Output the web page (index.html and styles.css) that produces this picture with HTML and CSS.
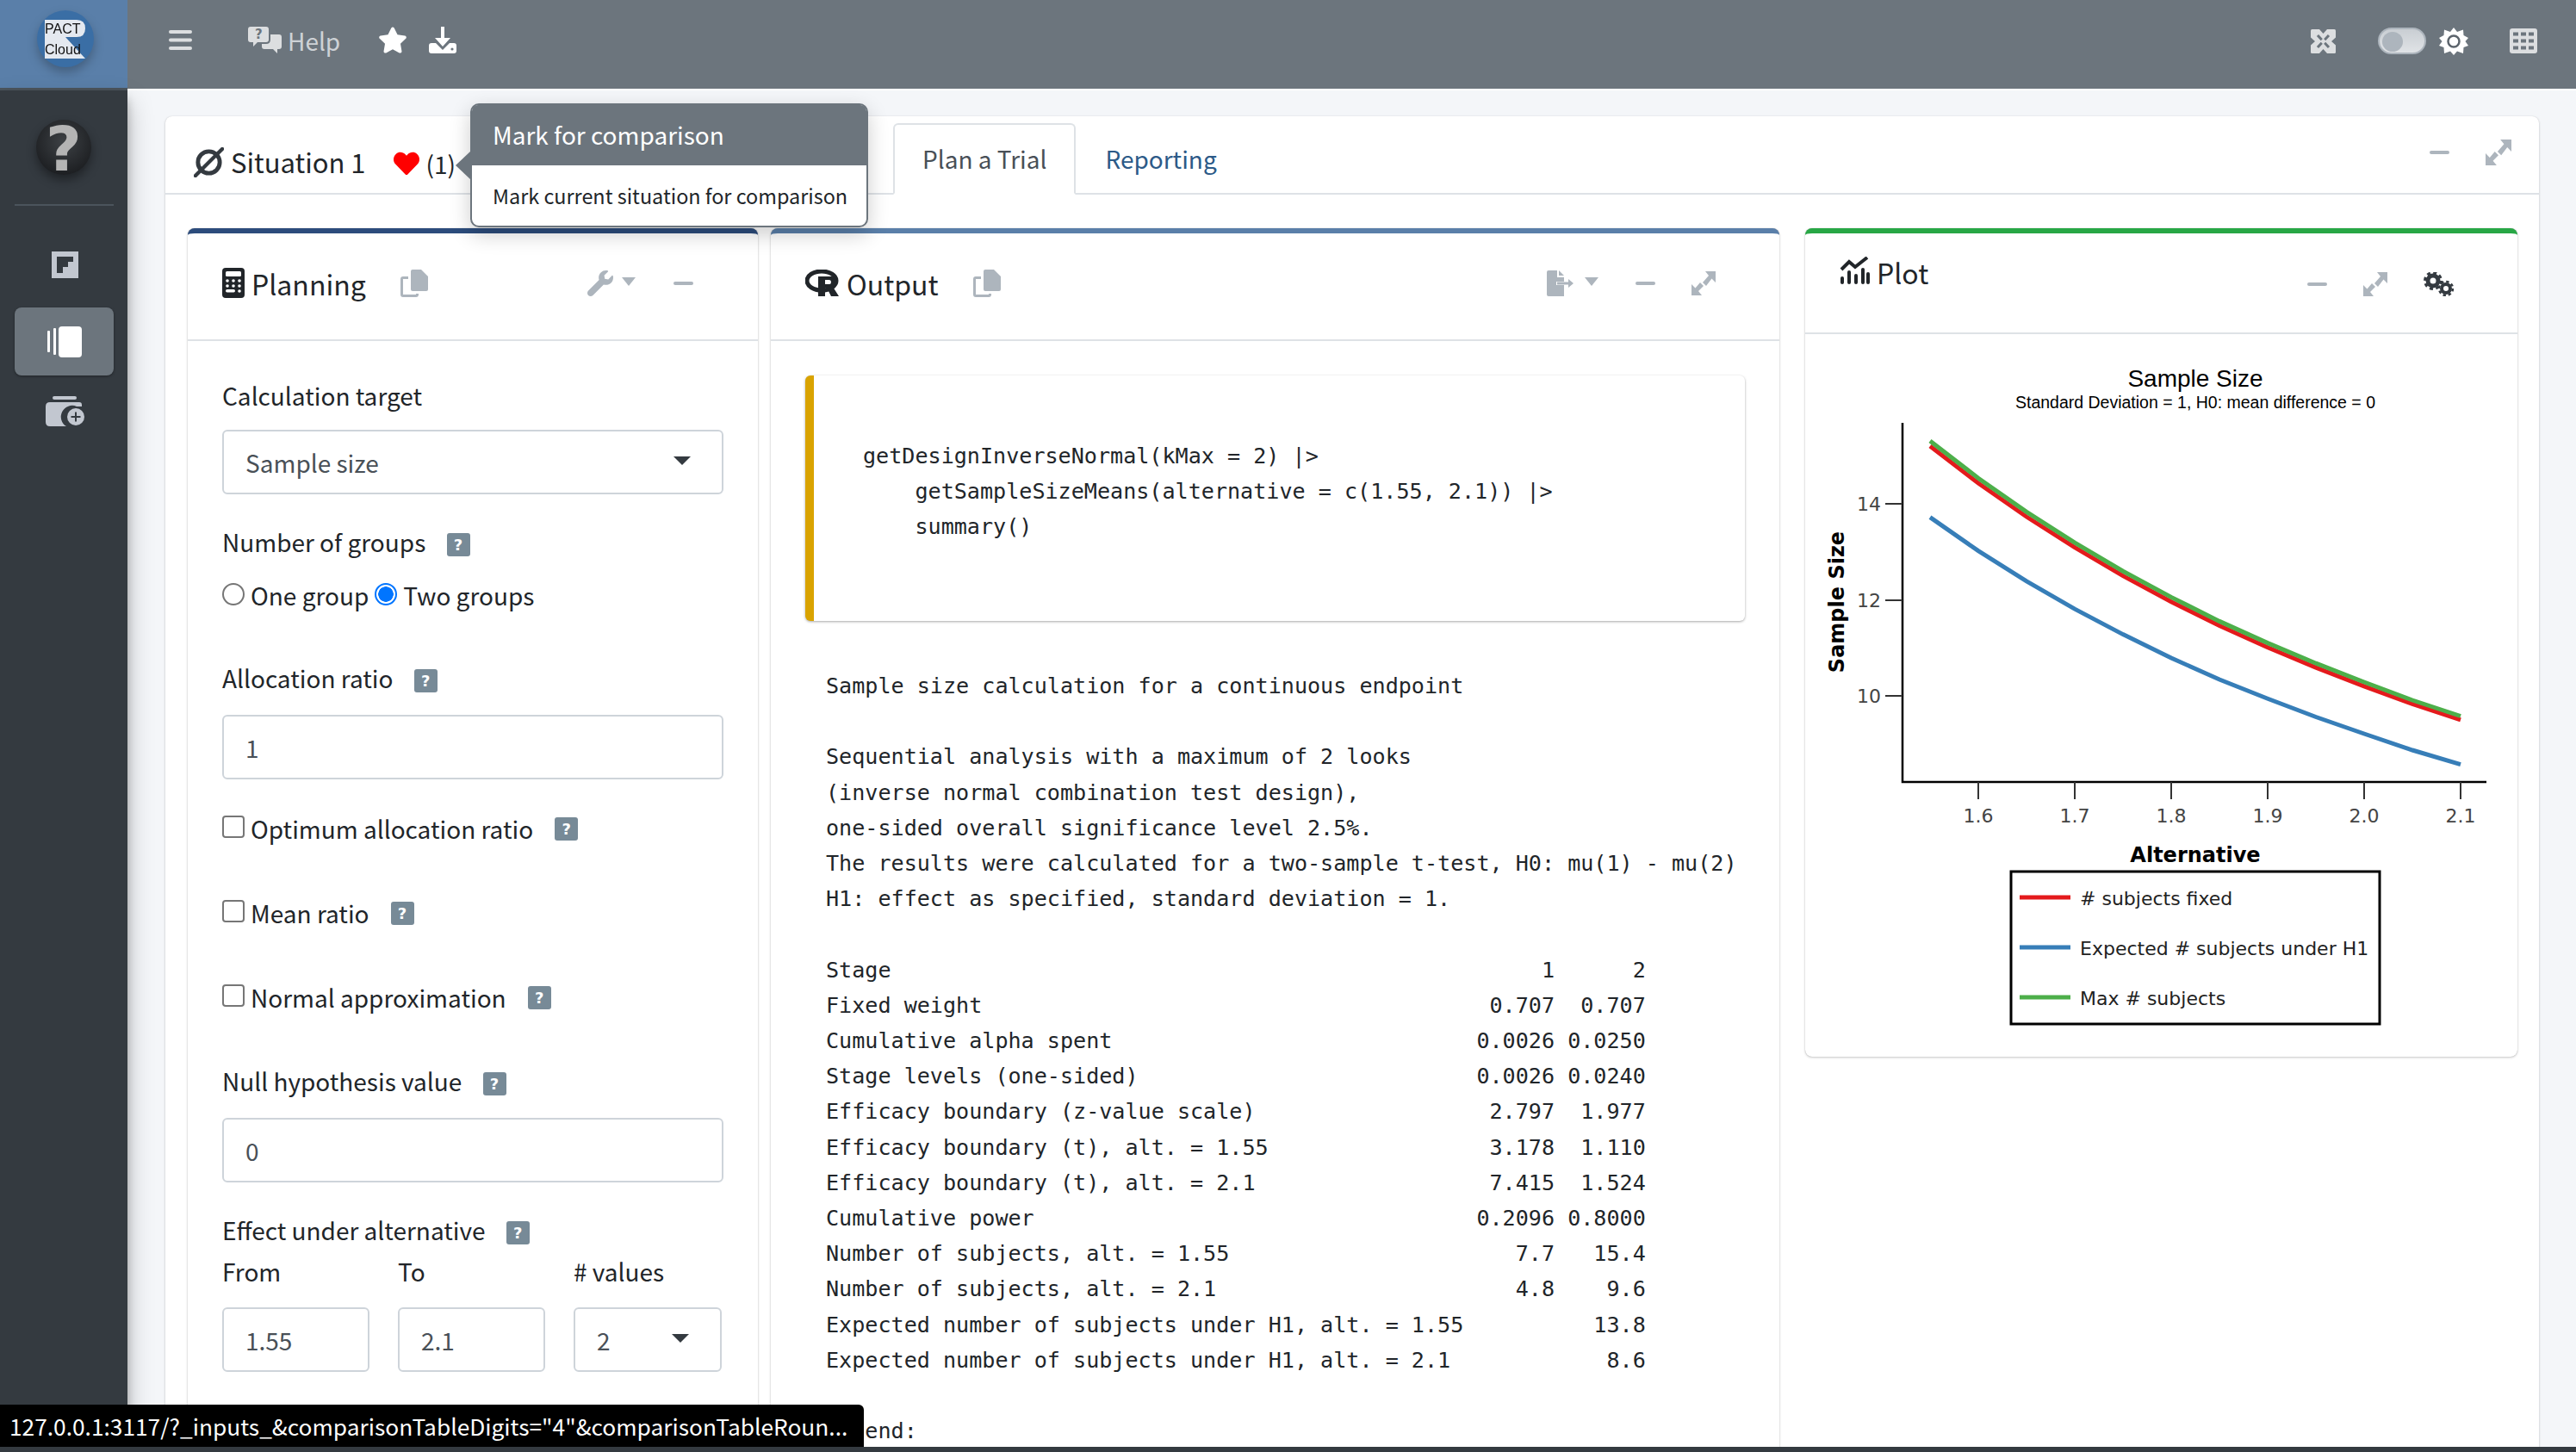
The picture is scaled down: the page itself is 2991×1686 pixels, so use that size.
FILE: index.html
```html
<!DOCTYPE html>
<html lang="en">
<head>
    <meta charset="UTF-8">
    <title>PACT Cloud</title>
    <link rel="stylesheet" href="styles.css">
</head>
<body>

<!-- top bar -->
<header class="topbar">
    <div class="brand">
        <svg class="brand-logo" viewBox="0 0 66 66" width="66" height="66">
            <circle cx="33" cy="33" r="33" fill="#3a6ea5"/>
            <path d="M9 11H46Q56 11 56 21Q56 31 46 31H33L56 56H9Z" fill="#e4e9f0"/>
            <text class="logo-text" x="9" y="27">PACT</text>
            <text class="logo-text" x="9" y="51">Cloud</text>
        </svg>
    </div>
    <div class="topbar-left">
        <svg class="icon-bars" viewBox="0 0 27 23" width="27" height="23">
            <rect y="0" width="27" height="4" rx="2"/>
            <rect y="9.5" width="27" height="4" rx="2"/>
            <rect y="19" width="27" height="4" rx="2"/>
        </svg>
        <span class="help-link">
            <svg viewBox="0 0 39 31" width="39" height="31">
                <path d="M3 0H21Q24 0 24 3V15Q24 18 21 18H11L6 23V18H3Q0 18 0 15V3Q0 0 3 0Z" fill="#dcdee0"/>
                <path d="M19 9H36Q39 9 39 12V23Q39 26 36 26H34V31L29 26H19Q16 26 16 23V20H21Q26 20 26 15V9Z" fill="#dcdee0"/>
                <text class="help-q" x="8" y="14">?</text>
            </svg>
            Help
        </span>
        <svg class="icon-star" viewBox="0 0 576 512" width="34" height="31">
            <path d="M259.3 17.8L194 150.2 47.9 171.5c-26.2 3.8-36.7 36.1-17.7 54.6l105.7 103-25 145.5c-4.5 26.3 23.2 46 46.4 33.7L288 439.6l130.7 68.7c23.2 12.2 50.9-7.4 46.4-33.7l-25-145.5 105.7-103c19-18.5 8.5-50.8-17.7-54.6L382 150.2 316.7 17.8c-11.7-23.6-45.6-23.9-57.4 0z" fill="#fff"/>
        </svg>
        <svg class="icon-download" viewBox="0 0 32 31" width="32" height="31">
            <path d="M14 0H18V13H25L16 23L7 13H14Z" fill="#fff"/>
            <path d="M3 19H8L16 27L24 19H29Q32 19 32 22V28Q32 31 29 31H3Q0 31 0 28V22Q0 19 3 19Z" fill="#fff"/>
            <circle cx="27" cy="26" r="1.6" fill="#6c757d"/>
        </svg>
    </div>
    <div class="topbar-right">
        <svg class="icon-full" viewBox="0 0 29 28" width="29" height="28">
            <rect width="29" height="28" rx="1.5" fill="#dcdee0"/>
            <path d="M10 0H19L14.5 5ZM10 28H19L14.5 23ZM0 9.5V18.5L5 14ZM29 9.5V18.5L24 14Z" fill="#6c757d"/>
            <path d="M8 7L21 21M21 7L8 21" stroke="#6c757d" stroke-width="3"/>
            <path d="M14.5 10.5L18 14L14.5 17.5L11 14Z" fill="#dcdee0"/>
        </svg>
        <span class="toggle"><span class="toggle-knob"></span></span>
        <svg class="icon-sun" viewBox="0 0 34 32" width="34" height="32">
            <polygon points="17,0 21,5 28,2.5 28.5,9 34,12 30.5,16 34,21 28.5,23 28,30 21,27.5 17,32 13,27.5 6,30 5.5,23 0,21 3.5,16 0,12 5.5,9 6,2.5 13,5" fill="#fff"/>
            <circle cx="17" cy="16" r="6.5" fill="#fff" stroke="#5c646c" stroke-width="2.5"/>
        </svg>
        <svg class="icon-grid" viewBox="0 0 32 29" width="32" height="29">
            <rect width="32" height="29" rx="3" fill="#dcdee0"/>
            <g fill="#6c757d">
                <rect x="4" y="4.5" width="6" height="4"/><rect x="13" y="4.5" width="6" height="4"/><rect x="22" y="4.5" width="6" height="4"/>
                <rect x="4" y="12.5" width="6" height="4"/><rect x="13" y="12.5" width="6" height="4"/><rect x="22" y="12.5" width="6" height="4"/>
                <rect x="4" y="20.5" width="6" height="4"/><rect x="13" y="20.5" width="6" height="4"/><rect x="22" y="20.5" width="6" height="4"/>
            </g>
        </svg>
    </div>
</header>

<div class="layout">
    <!-- sidebar -->
    <aside class="sidebar">
        <svg class="help-ball" viewBox="0 0 66 66" width="66" height="66">
            <defs>
                <radialGradient id="ball" cx="50%" cy="40%" r="60%">
                    <stop offset="0" stop-color="#3d4145"/>
                    <stop offset="1" stop-color="#1d1f22"/>
                </radialGradient>
            </defs>
            <circle cx="33" cy="33" r="32" fill="url(#ball)"/>
            <text class="ball-q" x="33" y="60">?</text>
        </svg>
        <div class="side-divider"></div>
        <div class="side-item">
            <svg viewBox="0 0 31 31" width="31" height="31">
                <path d="M0 0H31V31H0ZM6 6V25H13V18H19V12H25V6Z" fill="#c2c7d0" fill-rule="evenodd"/>
            </svg>
        </div>
        <div class="side-item side-item-active">
            <svg viewBox="0 0 40 36" width="40" height="36">
                <rect x="0" y="5" width="3" height="25" rx="1" fill="#fff"/>
                <rect x="7" y="2" width="3" height="31" rx="1" fill="#fff"/>
                <rect x="13" y="0" width="27" height="36" rx="4" fill="#fff"/>
            </svg>
        </div>
        <div class="side-item">
            <svg viewBox="0 0 45 35" width="45" height="35">
                <rect x="8" y="0" width="28" height="4" rx="2" fill="#c2c7d0"/>
                <path d="M5 7H39Q42 7 42 10V12H36A13 13 0 0 0 24 35H5Q0 35 0 30V12Q0 7 5 7Z" fill="#c2c7d0"/>
                <circle cx="35" cy="24" r="10" fill="#c2c7d0"/>
                <path d="M35 18.5V29.5M29.5 24H40.5" stroke="#343a40" stroke-width="2"/>
            </svg>
        </div>
    </aside>

    <!-- content -->
    <main class="content">
        <section class="outer-card">
            <div class="outer-head">
                <div class="situation">
                    <svg viewBox="0 0 36 36" width="35" height="35">
                        <circle cx="18" cy="18" r="13" fill="none" stroke="#343a40" stroke-width="5"/>
                        <path d="M2 34L34 2" stroke="#343a40" stroke-width="4.5" stroke-linecap="round"/>
                    </svg>
                    <span class="situation-name">Situation 1</span>
                    <svg class="heart" viewBox="0 0 512 512" width="32" height="30">
                        <path d="M462.3 62.6C407.5 15.9 326 24.3 275.7 76.2L256 96.5l-19.7-20.3C186.1 24.3 104.5 15.9 49.7 62.6c-62.8 53.6-66.1 149.8-9.9 207.9l193.5 199.8c12.5 12.9 32.8 12.9 45.3 0l193.5-199.8c56.3-58.1 53-154.3-9.8-207.9z" fill="#f00"/>
                    </svg>
                    <span class="situation-count">(1)</span>
                </div>
                <nav class="tabs">
                    <span class="tab tab-active">Plan a Trial</span>
                    <span class="tab">Reporting</span>
                </nav>
                <div class="tools tools-outer">
                    <span class="icon-minus"></span>
                    <svg class="icon-expand" viewBox="0 0 28 28" width="30" height="30"><use href="#expand"/></svg>
                </div>
            </div>

            <div class="panels">
                <!-- planning -->
                <section class="panel panel-planning">
                    <div class="panel-head">
                        <svg viewBox="0 0 26 35" width="26" height="35">
                            <rect width="26" height="35" rx="4" fill="#212529"/>
                            <rect x="4" y="4" width="18" height="6" rx="1.5" fill="#fff"/>
                            <g fill="#fff">
                                <circle cx="6" cy="15" r="1.8"/><circle cx="13" cy="15" r="1.8"/><circle cx="20" cy="15" r="1.8"/>
                                <circle cx="6" cy="21" r="1.8"/><circle cx="13" cy="21" r="1.8"/><circle cx="20" cy="21" r="1.8"/>
                                <rect x="4" y="25" width="11" height="3.5" rx="1.7"/><circle cx="20" cy="27" r="1.8"/>
                            </g>
                        </svg>
                        <span class="panel-title">Planning</span>
                        <svg class="icon-copy" viewBox="0 0 32 32" width="32" height="32"><use href="#copy"/></svg>
                        <div class="tools tools-planning">
                            <svg viewBox="0 0 512 512" width="30" height="32">
                                <path d="M507.73 109.1c-2.24-9.03-13.54-12.09-20.12-5.51l-74.36 74.36-67.88-11.31-11.31-67.88 74.36-74.36c6.62-6.62 3.43-17.9-5.66-20.16-47.38-11.74-99.55.91-136.58 37.93-39.64 39.64-50.55 97.1-34.05 147.2L18.74 402.76c-24.99 24.99-24.99 65.51 0 90.5 24.99 24.99 65.51 24.99 90.5 0l213.21-213.21c50.12 16.71 107.47 5.68 147.37-34.22 37.07-37.07 49.7-89.32 37.91-136.73z" fill="#adb5bd"/>
                            </svg>
                            <span class="caret-mini"></span>
                            <span class="icon-minus"></span>
                        </div>
                    </div>
                    <div class="panel-body form">
                        <div class="field-label">Calculation target</div>
                        <div class="control control-wide">Sample size<span class="caret"></span></div>

                        <div class="field-label group">Number of groups <span class="hint">?</span></div>
                        <div class="radio-row">
                            <span class="radio"></span><span>One group</span>
                            <span class="radio radio-on"></span><span>Two groups</span>
                        </div>

                        <div class="field-label block">Allocation ratio <span class="hint">?</span></div>
                        <div class="control control-wide">1</div>

                        <div class="check-row check-first"><span class="checkbox"></span>Optimum allocation ratio <span class="hint">?</span></div>
                        <div class="check-row"><span class="checkbox"></span>Mean ratio <span class="hint">?</span></div>
                        <div class="check-row"><span class="checkbox"></span>Normal approximation <span class="hint">?</span></div>

                        <div class="field-label block">Null hypothesis value <span class="hint">?</span></div>
                        <div class="control control-wide">0</div>

                        <div class="field-label group">Effect under alternative <span class="hint">?</span></div>
                        <div class="triple">
                            <div class="triple-label">From</div>
                            <div class="triple-label">To</div>
                            <div class="triple-label"># values</div>
                            <div class="control">1.55</div>
                            <div class="control">2.1</div>
                            <div class="control">2<span class="caret"></span></div>
                        </div>
                    </div>
                </section>

                <!-- output -->
                <section class="panel panel-output">
                    <div class="panel-head">
                        <svg viewBox="0 0 40 31" width="40" height="31">
                            <ellipse cx="19" cy="13" rx="17" ry="11" fill="none" stroke="#212529" stroke-width="5"/>
                            <path d="M15 8H31Q37 8 37 14Q37 18 32 20L39 31H30L25 21H23V31H15Z" fill="#212529"/>
                            <path d="M23 12V17H28Q30 17 30 14.5Q30 12 28 12Z" fill="#fff"/>
                        </svg>
                        <span class="panel-title">Output</span>
                        <svg class="icon-copy" viewBox="0 0 32 32" width="32" height="32"><use href="#copy"/></svg>
                        <div class="tools tools-output">
                            <svg viewBox="0 0 32 30" width="32" height="30">
                                <path d="M0 2Q0 0 2 0H12V8H20V13H11V17H20V30H2Q0 30 0 28Z" fill="#adb5bd"/>
                                <path d="M14 0L20 6H14Z" fill="#adb5bd"/>
                                <path d="M12 13.5H25V10L31 15L25 20V16.5H12Z" fill="#adb5bd"/>
                            </svg>
                            <span class="caret-mini"></span>
                            <span class="icon-minus"></span>
                            <svg class="icon-expand" viewBox="0 0 28 28" width="28" height="28"><use href="#expand"/></svg>
                        </div>
                    </div>
                    <div class="panel-body output-body">
                        <pre class="code-box">getDesignInverseNormal(kMax = 2) |&gt;
    getSampleSizeMeans(alternative = c(1.55, 2.1)) |&gt;
    summary()</pre>
                        <pre class="result">Sample size calculation for a continuous endpoint

Sequential analysis with a maximum of 2 looks
(inverse normal combination test design),
one-sided overall significance level 2.5%.
The results were calculated for a two-sample t-test, H0: mu(1) - mu(2)
H1: effect as specified, standard deviation = 1.

Stage                                                  1      2
Fixed weight                                       0.707  0.707
Cumulative alpha spent                            0.0026 0.0250
Stage levels (one-sided)                          0.0026 0.0240
Efficacy boundary (z-value scale)                  2.797  1.977
Efficacy boundary (t), alt. = 1.55                 3.178  1.110
Efficacy boundary (t), alt. = 2.1                  7.415  1.524
Cumulative power                                  0.2096 0.8000
Number of subjects, alt. = 1.55                      7.7   15.4
Number of subjects, alt. = 2.1                       4.8    9.6
Expected number of subjects under H1, alt. = 1.55          13.8
Expected number of subjects under H1, alt. = 2.1            8.6

Legend:</pre>
                    </div>
                </section>

                <!-- plot -->
                <section class="panel panel-plot">
                    <div class="panel-head plot-head">
                        <svg class="plot-icon" viewBox="0 0 35 32" width="35" height="32">
                            <path d="M2 15L11 6L18 12L32 1" fill="none" stroke="#212529" stroke-width="4"/>
                            <rect x="1" y="23" width="4" height="9" rx="2" fill="#212529"/>
                            <rect x="9" y="16" width="4" height="16" rx="2" fill="#212529"/>
                            <rect x="17" y="20" width="4" height="12" rx="2" fill="#212529"/>
                            <rect x="25" y="13" width="4" height="19" rx="2" fill="#212529"/>
                            <rect x="31" y="18" width="4" height="14" rx="2" fill="#212529"/>
                        </svg>
                        <span class="panel-title">Plot</span>
                        <div class="tools tools-plot">
                            <span class="icon-minus"></span>
                            <svg class="icon-expand" viewBox="0 0 28 28" width="28" height="28"><use href="#expand"/></svg>
                            <svg viewBox="0 0 35 28" width="35" height="28">
                                <circle cx="11" cy="10" r="6" fill="none" stroke="#343a40" stroke-width="5"/>
                                <circle cx="11" cy="10" r="9.5" fill="none" stroke="#343a40" stroke-width="3" stroke-dasharray="4 3.45"/>
                                <circle cx="26" cy="19" r="5" fill="none" stroke="#343a40" stroke-width="4"/>
                                <circle cx="26" cy="19" r="8" fill="none" stroke="#343a40" stroke-width="2.5" stroke-dasharray="3.4 2.88"/>
                            </svg>
                        </div>
                    </div>
                    <svg class="chart" viewBox="2096 389 827 838" width="827" height="838">
                        <text class="chart-title" x="2549" y="450">Sample Size</text>
                        <text class="chart-sub" x="2549" y="475">Standard Deviation = 1, H0: mean difference = 0</text>

                        <path class="axis" d="M2209 492V909H2887"/>
                        <path class="axis-tick" d="M2297 909V929M2409 909V929M2521 909V929M2633 909V929M2745 909V929M2857 909V929M2189 586H2209M2189 698H2209M2189 809H2209"/>
                        <text class="tick-x" x="2297" y="956">1.6</text>
                        <text class="tick-x" x="2409" y="956">1.7</text>
                        <text class="tick-x" x="2521" y="956">1.8</text>
                        <text class="tick-x" x="2633" y="956">1.9</text>
                        <text class="tick-x" x="2745" y="956">2.0</text>
                        <text class="tick-x" x="2857" y="956">2.1</text>
                        <text class="tick-y" x="2184" y="594">14</text>
                        <text class="tick-y" x="2184" y="706">12</text>
                        <text class="tick-y" x="2184" y="817">10</text>

                        <text class="axis-title" x="2549" y="1002">Alternative</text>
                        <text class="axis-title" transform="translate(2141 700) rotate(-90)">Sample Size</text>

                        <polyline class="line line-blue" points="2241,601.6 2297,640.6 2353,675.8 2409,708.1 2465,737.6 2521,765 2577,790 2633,812.3 2689,833.5 2745,853 2801,872 2857,888.7"/>
                        <polyline class="line line-red" points="2241,519.1 2297,562 2353,601 2409,636.7 2465,669.6 2521,699.7 2577,727.6 2633,752.7 2689,776.1 2745,797.8 2801,818.5 2857,836.9"/>
                        <polyline class="line line-green" points="2241,513 2297,556.2 2353,595.4 2409,631.2 2465,664.2 2521,694.4 2577,722.4 2633,747.6 2689,771.2 2745,793 2801,814 2857,832.5"/>

                        <rect class="legend-box" x="2335" y="1013" width="428" height="177"/>
                        <path class="line line-red" d="M2345 1043H2404"/>
                        <path class="line line-blue" d="M2345 1101H2404"/>
                        <path class="line line-green" d="M2345 1159H2404"/>
                        <text class="legend-text" x="2415" y="1052"># subjects fixed</text>
                        <text class="legend-text" x="2415" y="1110">Expected # subjects under H1</text>
                        <text class="legend-text" x="2415" y="1168">Max # subjects</text>
                    </svg>
                </section>
            </div>
        </section>
    </main>
</div>

<!-- popover over the heart button -->
<div class="popover">
    <div class="popover-title">Mark for comparison</div>
    <div class="popover-body">Mark current situation for comparison</div>
</div>

<!-- browser link status -->
<div class="status-link">127.0.0.1:3117/?_inputs_&amp;comparisonTableDigits="4"&amp;comparisonTableRoun...</div>
<div class="bottom-strip"></div>

<!-- shared icons -->
<svg class="icon-defs" width="0" height="0">
    <symbol id="copy" viewBox="0 0 32 32">
        <path d="M12 2Q12 0 14 0H24L32 8V23Q32 25 30 25H14Q12 25 12 23Z" fill="#adb5bd"/>
        <path d="M9 8H3Q0 8 0 11V29Q0 32 3 32H18Q21 32 21 29V28H18V29H3V11H9Z" fill="#adb5bd"/>
    </symbol>
    <symbol id="expand" viewBox="0 0 28 28">
        <path d="M28 0V13L23.5 8.5L17 17L13 13L20 5L16 0Z" fill="#adb5bd"/>
        <path d="M0 28V15L4.5 19.5L10 13L14 17L8 23L12 28Z" fill="#adb5bd"/>
    </symbol>
</svg>

</body>
</html>
```

FILE: styles.css
```css
* {
    box-sizing: border-box;
}
html, body {
    margin: 0;
    height: 100%;
    overflow: hidden;
}
body {
    font-family: "Noto Sans CJK SC", "Noto Sans", Arial, sans-serif;
    font-size: 28px;
    line-height: 36px;
    color: #212529;
    background-color: #f4f6f9;
}
svg {
    display: block;
    flex: none;
}
.icon-defs {
    position: absolute;
}

/* top bar */
.topbar {
    display: flex;
    align-items: center;
    height: 105px;
    background-color: #6c757d;
    border-bottom: 2px solid #fff;
}
.brand {
    display: flex;
    justify-content: center;
    align-items: center;
    width: 148px;
    height: 105px;
    background-color: #5a7fa9;
    border-bottom: 3px solid #4b545c;
    margin-bottom: -2px;
}
.brand-logo {
    margin-bottom: 12px;
    margin-left: 3px;
    filter: drop-shadow(0 6px 6px rgba(0, 0, 0, 0.25));
}
.logo-text {
    font-family: "Liberation Sans", Arial, sans-serif;
    font-size: 16px;
    fill: #111;
}
.topbar-left {
    display: flex;
    align-items: center;
    padding-left: 48px;
    margin-top: -10px;
}
.icon-bars {
    fill: #dcdee0;
    margin-right: 65px;
}
.help-link {
    display: flex;
    align-items: center;
    gap: 7px;
    font-size: 28px;
    color: #ced2d6;
    margin-right: 44px;
}
.help-q {
    font-family: "DejaVu Sans", sans-serif;
    font-size: 15px;
    font-weight: bold;
    fill: #6c757d;
}
.icon-star {
    margin-right: 25px;
}
.topbar-right {
    display: flex;
    align-items: center;
    margin-left: auto;
    padding-right: 45px;
    margin-top: -8px;
}
.icon-full {
    margin-right: 49px;
}
.toggle {
    display: block;
    width: 56px;
    height: 31px;
    padding: 3px;
    border-radius: 16px;
    background: linear-gradient(#c9ced3, #e0e3e6);
    border: 2px solid #adb5bd;
    margin-right: 15px;
}
.toggle-knob {
    display: block;
    width: 24px;
    height: 23px;
    border-radius: 50%;
    background-color: #adb5bd;
}
.icon-sun {
    margin-right: 48px;
}

/* page layout */
.layout {
    display: flex;
    height: 1581px;
}
.sidebar {
    display: flex;
    flex-direction: column;
    align-items: center;
    width: 148px;
    flex: none;
    background-color: #343a40;
    padding-top: 33px;
    box-shadow: 0 14px 28px rgba(0, 0, 0, 0.25), 0 10px 10px rgba(0, 0, 0, 0.22);
}
.help-ball {
    filter: drop-shadow(0 6px 6px rgba(0, 0, 0, 0.4));
}
.ball-q {
    font-family: "DejaVu Sans", sans-serif;
    font-size: 72px;
    font-weight: bold;
    text-anchor: middle;
    fill: #b4b4b4;
}
.side-divider {
    width: 115px;
    height: 2px;
    background-color: #4b545c;
    margin-top: 33px;
    margin-bottom: 29px;
}
.side-item {
    display: flex;
    justify-content: center;
    align-items: center;
    width: 115px;
    height: 79px;
    border-radius: 8px;
    margin-bottom: 10px;
    padding-left: 2px;
}
.side-item-active {
    background-color: #6c757d;
    box-shadow: 0 1px 3px rgba(0, 0, 0, 0.4);
    margin-bottom: 2px;
}
.content {
    flex: 1;
    padding: 30px 43px 0 44px;
    min-width: 0;
}

/* outer card */
.outer-card {
    height: 100%;
    background-color: #fff;
    border-radius: 8px 8px 0 0;
    box-shadow: 0 0 1px rgba(0, 0, 0, 0.125), 0 1px 3px rgba(0, 0, 0, 0.2);
}
.outer-head {
    display: flex;
    align-items: flex-end;
    height: 91px;
    border-bottom: 2px solid #dee2e6;
    padding-left: 33px;
}
.situation {
    display: flex;
    align-items: center;
    width: 812px;
    height: 90px;
    padding-top: 18px;
}
.situation-name {
    font-size: 31px;
    margin-left: 8px;
}
.heart {
    margin-left: 31px;
    margin-top: 3px;
}
.situation-count {
    margin-left: 7px;
    margin-top: 3px;
}
.tabs {
    display: flex;
    margin-bottom: -2px;
}
.tab {
    display: block;
    height: 83px;
    line-height: 78px;
    padding: 0 32px;
    font-size: 28px;
    color: #2c5a88;
    border: 2px solid transparent;
    border-radius: 6px 6px 0 0;
}
.tab-active {
    color: #495057;
    border-color: #dee2e6 #dee2e6 #fff;
}
.tools {
    display: flex;
    align-items: center;
    margin-left: auto;
}
.tools-outer {
    height: 90px;
    gap: 42px;
    padding-right: 32px;
    margin-bottom: 2px;
}
.icon-minus {
    display: block;
    width: 23px;
    height: 4px;
    border-radius: 2px;
    background-color: #adb5bd;
}
.caret-mini {
    width: 0;
    height: 0;
    border-left: 8px solid transparent;
    border-right: 8px solid transparent;
    border-top: 10px solid #adb5bd;
}

/* panels */
.panels {
    display: grid;
    grid-template-columns: 662px 1171px 842px;
    column-gap: 15px;
    align-items: start;
    padding: 39px 25px 0 26px;
}
.panel {
    background-color: #fff;
    border-top: 6px solid #2c4c7c;
    border-radius: 8px 8px 0 0;
    box-shadow: 0 0 1px rgba(0, 0, 0, 0.3), 0 1px 3px rgba(0, 0, 0, 0.2);
    height: 1500px;
}
.panel-output {
    border-top-color: #5a7fa9;
}
.panel-plot {
    border-top-color: #28a745;
    margin-left: 15px;
    height: 962px;
    border-radius: 8px;
}
.panel-head {
    display: flex;
    align-items: center;
    height: 125px;
    padding: 0 40px 8px;
    border-bottom: 2px solid #dee2e6;
}
.panel-title {
    font-size: 32px;
    margin-left: 8px;
}
.icon-copy {
    margin-left: 40px;
}
.tools-planning {
    padding-right: 35px;
}
.tools-planning .caret-mini {
    margin-left: 10px;
    margin-right: 44px;
    margin-top: -4px;
}
.tools-output {
    padding-right: 34px;
}
.tools-output .caret-mini {
    margin-left: 12px;
    margin-right: 43px;
    margin-top: -4px;
}
.tools-output .icon-minus {
    margin-right: 42px;
}
.plot-head {
    height: 117px;
    padding-bottom: 26px;
}
.plot-icon {
    margin-top: -4px;
}
.tools-plot {
    gap: 42px;
    padding-right: 34px;
    margin-top: 28px;
}

/* form */
.form {
    padding: 46px 40px 0;
}
.field-label {
    height: 36px;
    line-height: 34px;
    margin-bottom: 21px;
}
.field-label.group {
    margin-top: 38px;
    margin-bottom: 25px;
}
.field-label.block {
    margin-top: 62px;
    margin-bottom: 24px;
}
.control {
    display: flex;
    align-items: center;
    justify-content: space-between;
    height: 75px;
    padding: 0 36px 0 25px;
    border: 2px solid #ced4da;
    border-radius: 6px;
    color: #495057;
}
.caret {
    width: 0;
    height: 0;
    border-left: 10px solid transparent;
    border-right: 10px solid transparent;
    border-top: 10px solid #343a40;
    margin-top: -4px;
}
.radio-row {
    display: flex;
    align-items: center;
    height: 36px;
    margin-top: 2px;
    margin-bottom: -1px;
}
.radio {
    width: 26px;
    height: 26px;
    border-radius: 50%;
    border: 2px solid #767676;
    margin-right: 7px;
    margin-top: -2px;
}
.radio + span {
    margin-right: 7px;
}
.radio-on {
    border-color: #0075ff;
    background: radial-gradient(circle, #0075ff 0 8.5px, #fff 9px);
}
.check-row {
    display: flex;
    align-items: center;
    height: 36px;
    line-height: 32px;
    margin-top: 62px;
}
.check-first {
    margin-top: 39px;
}
.checkbox {
    width: 26px;
    height: 26px;
    border: 2px solid #767676;
    border-radius: 4px;
    margin-right: 7px;
    margin-top: -4px;
    flex: none;
}
.hint {
    display: inline-block;
    width: 27px;
    height: 27px;
    margin-left: 18px;
    border-radius: 3px;
    background-color: #778a97;
    color: #fff;
    font-family: "DejaVu Sans", sans-serif;
    font-size: 18px;
    font-weight: bold;
    line-height: 27px;
    text-align: center;
    vertical-align: 2px;
}
.check-row .hint {
    margin-left: 25px;
}
.triple {
    display: grid;
    grid-template-columns: 171px 171px 172px;
    column-gap: 33px;
    margin-top: -12px;
}
.triple-label {
    height: 36px;
    line-height: 32px;
    margin-bottom: 22px;
}

/* output */
.output-body {
    padding: 40px 40px 0;
}
pre {
    margin: 0;
    font-family: "DejaVu Sans Mono", "Liberation Mono", monospace;
    font-size: 25.1px;
    line-height: 41.2px;
    color: #212529;
}
.code-box {
    height: 285px;
    padding: 73px 0 0 57px;
    border-left: 10px solid #d9a300;
    border-radius: 6px;
    background-color: #fff;
    box-shadow: 0 1px 3px rgba(0, 0, 0, 0.35);
}
.result {
    padding: 55px 0 0 24px;
}

/* plot */
.chart-title {
    font-family: "Liberation Sans", Arial, sans-serif;
    font-size: 28px;
    text-anchor: middle;
}
.chart-sub {
    font-family: "Liberation Sans", Arial, sans-serif;
    font-size: 19.5px;
    text-anchor: middle;
}
.axis {
    fill: none;
    stroke: #000;
    stroke-width: 2.5px;
}
.axis-tick {
    stroke: #333;
    stroke-width: 2px;
}
.tick-x, .tick-y {
    font-family: "DejaVu Sans", sans-serif;
    font-size: 22px;
    fill: #444;
}
.tick-x {
    text-anchor: middle;
}
.tick-y {
    text-anchor: end;
}
.axis-title {
    font-family: "DejaVu Sans", sans-serif;
    font-size: 24px;
    font-weight: bold;
    text-anchor: middle;
}
.line {
    fill: none;
    stroke-width: 5px;
}
.line-red {
    stroke: #e41a1c;
}
.line-blue {
    stroke: #377eb8;
}
.line-green {
    stroke: #4daf4a;
}
.legend-box {
    fill: #fff;
    stroke: #000;
    stroke-width: 3px;
}
.legend-text {
    font-family: "DejaVu Sans", sans-serif;
    font-size: 22px;
    fill: #222;
}

/* popover */
.popover {
    position: absolute;
    left: 546px;
    top: 120px;
    width: 462px;
    height: 144px;
    background-color: #fff;
    border: 2px solid #6c757d;
    border-radius: 10px;
    box-shadow: 0 8px 24px rgba(0, 0, 0, 0.2);
}
.popover::before {
    content: "";
    position: absolute;
    left: -19px;
    top: 53px;
    border-top: 17px solid transparent;
    border-bottom: 17px solid transparent;
    border-right: 18px solid #6c757d;
}
.popover-title {
    height: 70px;
    line-height: 68px;
    padding-left: 24px;
    background-color: #6c757d;
    color: #fff;
    font-size: 28px;
    border-radius: 7px 7px 0 0;
}
.popover-body {
    height: 70px;
    line-height: 71px;
    padding-left: 24px;
    font-size: 23.4px;
    white-space: nowrap;
}

/* status link */
.status-link {
    position: fixed;
    left: 0;
    bottom: 6px;
    width: 1003px;
    height: 49px;
    line-height: 50px;
    padding-left: 11px;
    background-color: #000;
    color: #fff;
    font-size: 26.3px;
    border-radius: 0 6px 0 0;
    white-space: nowrap;
    overflow: hidden;
}
.bottom-strip {
    position: fixed;
    left: 0;
    right: 0;
    bottom: 0;
    height: 6px;
    background-color: #343a40;
}
```
